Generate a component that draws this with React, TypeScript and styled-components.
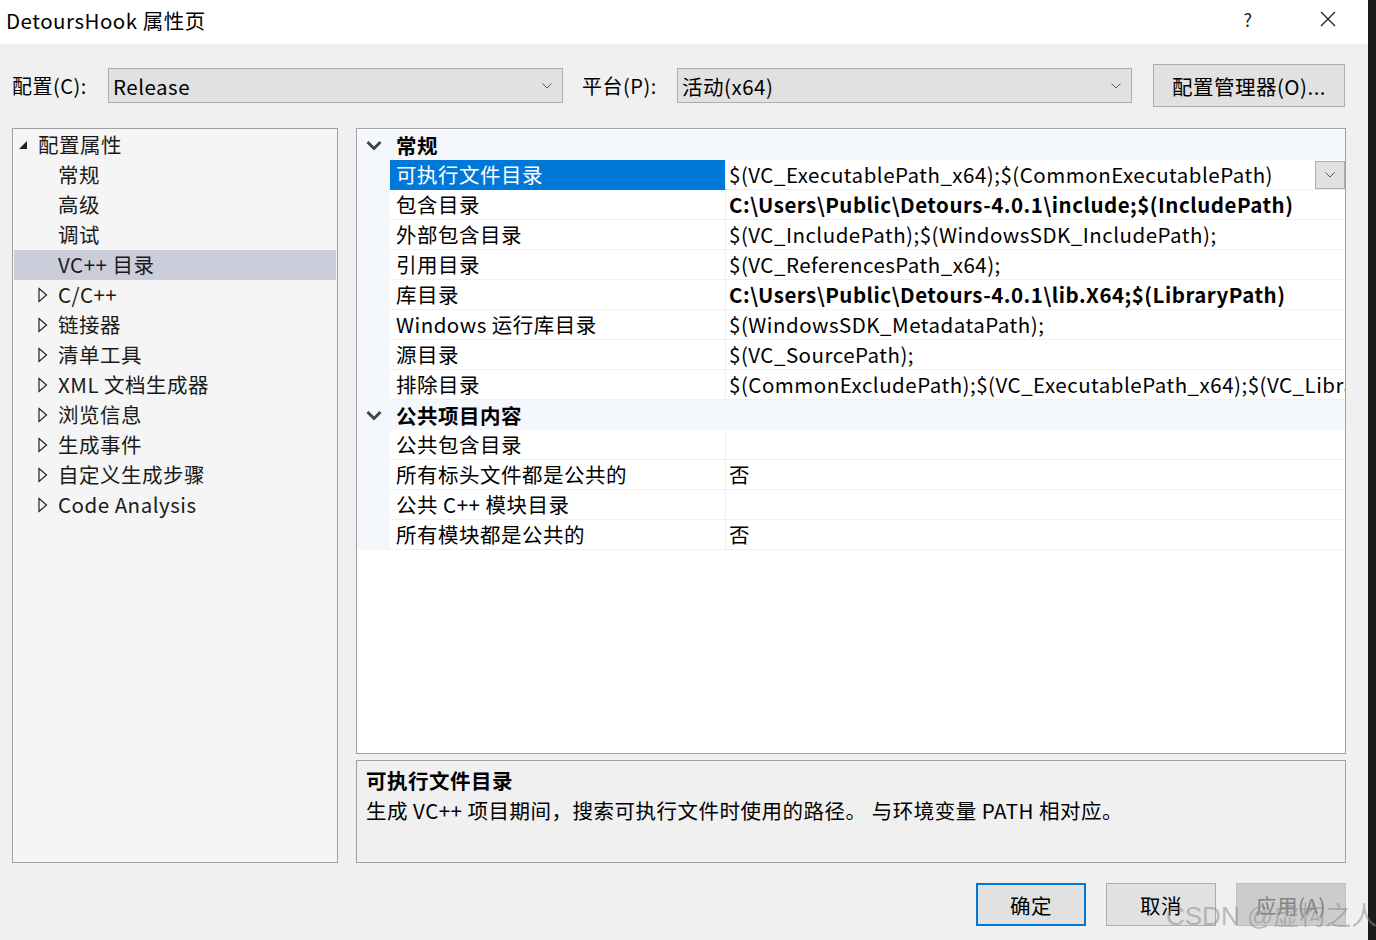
import React from "react";
import styled, { createGlobalStyle } from "styled-components";

const Global = createGlobalStyle`
  html, body { margin: 0; padding: 0; }
  body { font-family: "Noto Sans CJK SC", "Noto Sans", sans-serif; color: #000; letter-spacing: 0.5px; }
  * { box-sizing: border-box; }
`;

const Screen = styled.div`
  width: 1376px;
  height: 940px;
  display: flex;
  overflow: hidden;
  position: relative;
`;

const Dialog = styled.div`
  width: 1368px;
  height: 940px;
  display: flex;
  flex-direction: column;
  background: #f0f0f0;
`;

const DarkStrip = styled.div`
  width: 8px;
  height: 940px;
  background: #1b1b1b;
`;

const TitleBar = styled.div`
  height: 44px;
  background: #ffffff;
  display: flex;
  align-items: center;
  padding-left: 6px;
`;

const TitleText = styled.div`
  flex: 1;
  font-size: 20.5px;
  line-height: 1;
  margin-top: -4px;
`;

const TitleIcon = styled.div<{ $w: number }>`
  width: ${(p) => p.$w}px;
  height: 44px;
  display: flex;
  align-items: center;
  justify-content: center;
  font-size: 18px;
  color: #222;
  margin-top: -6px;
`;

const Body = styled.div`
  flex: 1;
  display: flex;
  flex-direction: column;
  padding: 20px 22px 0 12px;
`;

const ConfigRow = styled.div`
  height: 43px;
  display: flex;
  align-items: center;
`;

const Label = styled.div<{ $w: number }>`
  width: ${(p) => p.$w}px;
  flex: none;
  font-size: 20px;
  line-height: 1;
  white-space: nowrap;
`;

const Combo = styled.div`
  width: 455px;
  flex: none;
  height: 35px;
  background: #e1e1e1;
  border: 1px solid #adadad;
  display: flex;
  align-items: center;
  padding-left: 4px;
  font-size: 20.5px;
`;

const ComboText = styled.div`
  flex: 1;
  line-height: 1;
  margin-top: 1px;
`;

const ComboArrow = styled.div`
  width: 30px;
  display: flex;
  align-items: center;
  justify-content: center;
`;

const Gap = styled.div<{ $w: number }>`
  width: ${(p) => p.$w}px;
  flex: none;
`;

const Button = styled.div<{ $w: number; $primary?: boolean; $disabled?: boolean }>`
  width: ${(p) => p.$w}px;
  height: 43px;
  flex: none;
  display: flex;
  align-items: center;
  justify-content: center;
  font-size: 20.5px;
  background: ${(p) => (p.$disabled ? "#cccccc" : "#e1e1e1")};
  color: ${(p) => (p.$disabled ? "#838383" : "#000")};
  border: ${(p) => (p.$primary ? "2px solid #0078d7" : p.$disabled ? "1px solid #bfbfbf" : "1px solid #adadad")};
  line-height: 1;
  padding-top: 2px;
`;

const Main = styled.div`
  margin-top: 21px;
  display: flex;
  gap: 18px;
  height: 735px;
`;

const TreePanel = styled.div`
  width: 326px;
  flex: none;
  height: 735px;
  background: #f5f5f5;
  border: 1px solid #a0a0a0;
  padding: 1px;
  display: flex;
  flex-direction: column;
`;

const TreeRow = styled.div<{ $selected?: boolean; $indent: number }>`
  height: 30px;
  display: flex;
  align-items: center;
  padding-left: ${(p) => p.$indent}px;
  background: ${(p) => (p.$selected ? "#cbcdda" : "transparent")};
  font-size: 20.5px;
  color: #1a1a1a;
  white-space: nowrap;
`;

const Expander = styled.div`
  width: 20px;
  display: flex;
  align-items: center;
  justify-content: flex-start;
  flex: none;
`;

const TreeText = styled.div`
  line-height: 1;
  margin-top: -1px;
`;

const RightColumn = styled.div`
  width: 990px;
  flex: none;
  display: flex;
  flex-direction: column;
  gap: 6px;
`;

const GridPanel = styled.div`
  height: 628px;
  background: #ffffff;
  border: 1px solid #a0a0a0;
  padding-top: 1px;
  overflow: hidden;
  display: flex;
  flex-direction: column;
`;

const CategoryRow = styled.div`
  height: 30px;
  flex: none;
  display: flex;
  align-items: center;
  background: #f4f7fc;
`;

const CategoryToggle = styled.div`
  width: 33px;
  display: flex;
  align-items: center;
  justify-content: center;
  flex: none;
`;

const CategoryName = styled.div`
  padding-left: 6px;
  font-size: 20.5px;
  font-weight: 700;
  line-height: 1;
`;

const PropRow = styled.div`
  height: 30px;
  flex: none;
  display: flex;
`;

const Gutter = styled.div`
  width: 33px;
  flex: none;
  background: #f4f7fc;
`;

const NameCell = styled.div<{ $selected?: boolean }>`
  width: 336px;
  flex: none;
  display: flex;
  align-items: center;
  padding-left: 6px;
  font-size: 20.5px;
  background: ${(p) => (p.$selected ? "#0078d7" : "#ffffff")};
  color: ${(p) => (p.$selected ? "#ffffff" : "#000")};
  border-right: 1px solid #f0f0f0;
  border-bottom: 1px solid ${(p) => (p.$selected ? "#0078d7" : "#f0f0f0")};
  white-space: nowrap;
`;

const ValueCell = styled.div`
  flex: 1;
  min-width: 0;
  display: flex;
  align-items: center;
  padding-left: 3px;
  border-bottom: 1px solid #f0f0f0;
  overflow: hidden;
  position: relative;
`;

const CellText = styled.div<{ $bold?: boolean }>`
  font-size: 20.5px;
  font-weight: ${(p) => (p.$bold ? 700 : 400)};
  line-height: 1;
  white-space: nowrap;
`;

const DropButton = styled.div`
  position: absolute;
  right: 0;
  top: 1px;
  width: 30px;
  height: 28px;
  background: #e1e1e1;
  border: 1px solid #adadad;
  display: flex;
  align-items: center;
  justify-content: center;
`;

const DescPanel = styled.div`
  height: 103px;
  background: #f0f0f0;
  border: 1px solid #a0a0a0;
  padding: 9px 9px;
  display: flex;
  flex-direction: column;
  gap: 9px;
`;

const DescTitle = styled.div`
  font-size: 20.5px;
  font-weight: 700;
  line-height: 21px;
`;

const DescText = styled.div`
  font-size: 20.5px;
  line-height: 21px;
  white-space: nowrap;
`;

const ButtonRow = styled.div`
  margin-top: 20px;
  display: flex;
  justify-content: flex-end;
  gap: 20px;
`;

const Watermark = styled.div`
  position: absolute;
  left: 1166px;
  top: 895px;
  font-family: "Liberation Sans", "Noto Sans CJK SC", sans-serif;
  font-size: 26px;
  letter-spacing: 0;
  color: rgba(140, 140, 140, 0.55);
  white-space: nowrap;
  pointer-events: none;
`;

const Chevron = ({ size = 10, color = "#555", w = 1 }: { size?: number; color?: string; w?: number }) => (
  <svg width={size} height={size * 0.6} viewBox="0 0 10 6">
    <path d="M0.5 0.5 L5 5 L9.5 0.5" fill="none" stroke={color} strokeWidth={w} />
  </svg>
);

const BoldChevron = () => (
  <svg width="16" height="11" viewBox="0 0 16 11">
    <path d="M1.5 2 L8 8.5 L14.5 2" fill="none" stroke="#444" strokeWidth="3" />
  </svg>
);

const FilledTri = () => (
  <svg width="10" height="10" viewBox="0 0 10 10">
    <path d="M9 1 L9 9 L1 9 Z" fill="#222" />
  </svg>
);

const OpenTri = () => (
  <svg width="10" height="16" viewBox="0 0 10 16">
    <path d="M1 1.5 L8.5 8 L1 14.5 Z" fill="none" stroke="#222" strokeWidth="1.2" />
  </svg>
);

type TreeItem = { text: string; indent: number; kind: "open" | "none" | "collapsed"; selected?: boolean };

const treeItems: TreeItem[] = [
  { text: "配置属性", indent: 4, kind: "open" },
  { text: "常规", indent: 24, kind: "none" },
  { text: "高级", indent: 24, kind: "none" },
  { text: "调试", indent: 24, kind: "none" },
  { text: "VC++ 目录", indent: 24, kind: "none", selected: true },
  { text: "C/C++", indent: 24, kind: "collapsed" },
  { text: "链接器", indent: 24, kind: "collapsed" },
  { text: "清单工具", indent: 24, kind: "collapsed" },
  { text: "XML 文档生成器", indent: 24, kind: "collapsed" },
  { text: "浏览信息", indent: 24, kind: "collapsed" },
  { text: "生成事件", indent: 24, kind: "collapsed" },
  { text: "自定义生成步骤", indent: 24, kind: "collapsed" },
  { text: "Code Analysis", indent: 24, kind: "collapsed" },
];

type Prop = { name: string; value: string; bold?: boolean; selected?: boolean };

const general: Prop[] = [
  { name: "可执行文件目录", value: "$(VC_ExecutablePath_x64);$(CommonExecutablePath)", selected: true },
  { name: "包含目录", value: "C:\\Users\\Public\\Detours-4.0.1\\include;$(IncludePath)", bold: true },
  { name: "外部包含目录", value: "$(VC_IncludePath);$(WindowsSDK_IncludePath);" },
  { name: "引用目录", value: "$(VC_ReferencesPath_x64);" },
  { name: "库目录", value: "C:\\Users\\Public\\Detours-4.0.1\\lib.X64;$(LibraryPath)", bold: true },
  { name: "Windows 运行库目录", value: "$(WindowsSDK_MetadataPath);" },
  { name: "源目录", value: "$(VC_SourcePath);" },
  { name: "排除目录", value: "$(CommonExcludePath);$(VC_ExecutablePath_x64);$(VC_LibraryPath_x64)" },
];

const publicItems: Prop[] = [
  { name: "公共包含目录", value: "" },
  { name: "所有标头文件都是公共的", value: "否" },
  { name: "公共 C++ 模块目录", value: "" },
  { name: "所有模块都是公共的", value: "否" },
];

const PropRows = ({ items }: { items: Prop[] }) => (
  <>
    {items.map((p) => (
      <PropRow key={p.name}>
        <Gutter />
        <NameCell $selected={p.selected}>
          <CellText>{p.name}</CellText>
        </NameCell>
        <ValueCell>
          <CellText $bold={p.bold}>{p.value}</CellText>
          {p.selected && (
            <DropButton>
              <Chevron size={10} color="#555" />
            </DropButton>
          )}
        </ValueCell>
      </PropRow>
    ))}
  </>
);

export default function App() {
  return (
    <Screen>
      <Global />
      <Dialog>
        <TitleBar>
          <TitleText>DetoursHook 属性页</TitleText>
          <TitleIcon $w={80}>?</TitleIcon>
          <TitleIcon $w={80}>
            <svg width="16" height="16" viewBox="0 0 16 16">
              <path d="M1 1 L15 15 M15 1 L1 15" stroke="#222" strokeWidth="1.3" />
            </svg>
          </TitleIcon>
        </TitleBar>
        <Body>
          <ConfigRow>
            <Label $w={96}>配置(C):</Label>
            <Combo>
              <ComboText>Release</ComboText>
              <ComboArrow>
                <Chevron size={10} color="#555" />
              </ComboArrow>
            </Combo>
            <Gap $w={19} />
            <Label $w={95}>平台(P):</Label>
            <Combo>
              <ComboText>活动(x64)</ComboText>
              <ComboArrow>
                <Chevron size={10} color="#555" />
              </ComboArrow>
            </Combo>
            <Gap $w={21} />
            <Button $w={192}>配置管理器(O)...</Button>
          </ConfigRow>
          <Main>
            <TreePanel>
              {treeItems.map((t) => (
                <TreeRow key={t.text} $indent={t.indent} $selected={t.selected}>
                  <Expander>
                    {t.kind === "open" && <FilledTri />}
                    {t.kind === "collapsed" && <OpenTri />}
                  </Expander>
                  <TreeText>{t.text}</TreeText>
                </TreeRow>
              ))}
            </TreePanel>
            <RightColumn>
              <GridPanel>
                <CategoryRow>
                  <CategoryToggle>
                    <BoldChevron />
                  </CategoryToggle>
                  <CategoryName>常规</CategoryName>
                </CategoryRow>
                <PropRows items={general} />
                <CategoryRow>
                  <CategoryToggle>
                    <BoldChevron />
                  </CategoryToggle>
                  <CategoryName>公共项目内容</CategoryName>
                </CategoryRow>
                <PropRows items={publicItems} />
              </GridPanel>
              <DescPanel>
                <DescTitle>可执行文件目录</DescTitle>
                <DescText>生成 VC++ 项目期间，搜索可执行文件时使用的路径。 与环境变量 PATH 相对应。</DescText>
              </DescPanel>
            </RightColumn>
          </Main>
          <ButtonRow>
            <Button $w={110} $primary>确定</Button>
            <Button $w={110}>取消</Button>
            <Button $w={110} $disabled>应用(A)</Button>
          </ButtonRow>
        </Body>
      </Dialog>
      <DarkStrip />
      <Watermark>CSDN @虚构之人</Watermark>
    </Screen>
  );
}
